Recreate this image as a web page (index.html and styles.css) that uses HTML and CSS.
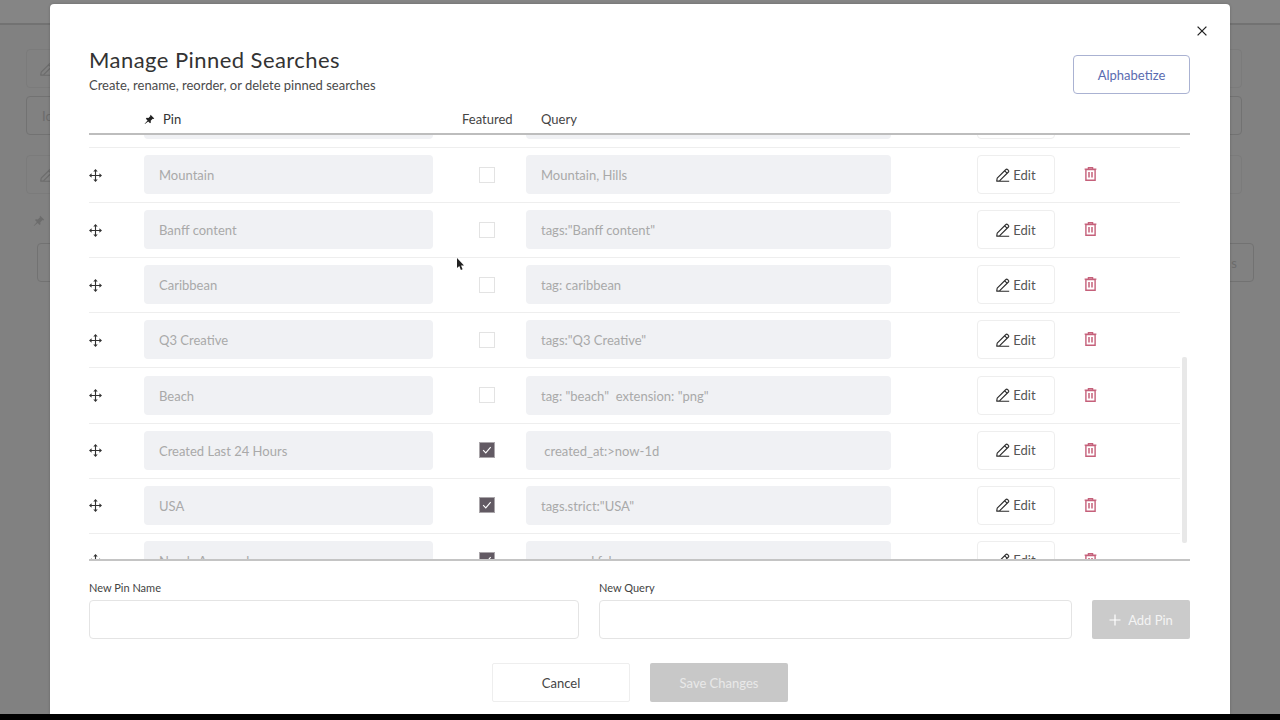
FILE: index.html
```html
<!DOCTYPE html>
<html lang="en">
<head>
    <meta charset="UTF-8">
    <title>Manage Pinned Searches</title>
    <link rel="stylesheet" href="styles.css">
</head>
<body>
    <svg class="icon-defs" aria-hidden="true">
        <symbol id="i-move" viewBox="0 0 14 14">
            <path d="M7 2v10M2 7h10" fill="none" stroke="currentColor" stroke-width="1.2"/>
            <path d="M7 0l2.4 2.8H4.6zM7 14l2.4-2.8H4.6zM0 7l2.8-2.4v4.8zM14 7l-2.8-2.4v4.8z" fill="currentColor"/>
        </symbol>
        <symbol id="i-pencil" viewBox="0 0 14 14">
            <path d="M1.2 10.2L9.9 1.5a1.1 1.1 0 0 1 1.6 0l.9.9a1.1 1.1 0 0 1 0 1.6l-8.7 8.7-3 .4zM8.7 2.8l2.6 2.6M1.2 13.2h12" fill="none" stroke="currentColor" stroke-width="1.1" stroke-linejoin="round"/>
        </symbol>
        <symbol id="i-trash" viewBox="0 0 13 14">
            <path d="M4.4 1.6V.7h4.2v.9M.6 2.2h11.8" fill="none" stroke="currentColor" stroke-width="1.3"/>
            <path d="M1.9 2.6h9.2v10.7H1.9z" fill="none" stroke="currentColor" stroke-width="1.4"/>
            <path d="M5 5v5.6M8 5v5.6" fill="none" stroke="currentColor" stroke-width="1.5"/>
        </symbol>
        <symbol id="i-pin" viewBox="0 0 12 12">
            <path d="M7.2.8l4 4-1 .6-.7-.3-2.2 2.2.2 1.9-.9.9-2-2L1 11l-.3-.3 3.2-3.7-1.9-1.9.9-.9 1.9.2 2.2-2.2-.3-.7z" fill="currentColor"/>
        </symbol>
        <symbol id="i-check" viewBox="0 0 16 16">
            <path d="M3.6 8.2l3 3 5.6-6.4" fill="none" stroke="#fff" stroke-width="1.3"/>
        </symbol>
    </svg>

    <div class="stage">
        <!-- page behind the dialog, dimmed -->
        <div class="back-page">
            <div class="back-top"></div>
            <div class="back-box back-box-first">
                <svg class="back-pencil"><use href="#i-pencil"/></svg>
            </div>
            <div class="back-box back-box-input"><span class="back-text">Ic</span></div>
            <div class="back-box back-box-third">
                <svg class="back-pencil"><use href="#i-pencil"/></svg>
            </div>
            <svg class="back-pin"><use href="#i-pin"/></svg>
            <div class="back-box back-box-last"><span class="back-text">s</span></div>
        </div>

        <div class="modal">
            <button class="close-btn" aria-label="Close">
                <svg width="10" height="10" viewBox="0 0 10 10"><path d="M.6.6l8.8 8.8M9.4.6L.6 9.4" stroke="#222" stroke-width="1.3" fill="none"/></svg>
            </button>

            <div class="modal-head">
                <div>
                    <h1>Manage Pinned Searches</h1>
                    <p class="subtitle">Create, rename, reorder, or delete pinned searches</p>
                </div>
                <button class="alpha-btn">Alphabetize</button>
            </div>

            <div class="col-head">
                <div class="col-pin"><svg class="pin-icon"><use href="#i-pin"/></svg>Pin</div>
                <div class="col-featured">Featured</div>
                <div class="col-query">Query</div>
            </div>

            <div class="pin-scroll">
                <div class="pin-list">
                    <div class="pin-row">
                        <svg class="grip"><use href="#i-move"/></svg>
                        <div class="field"></div>
                        <span class="check"></span>
                        <div class="field"></div>
                        <button class="edit-btn"></button>
                        <svg class="trash"><use href="#i-trash"/></svg>
                    </div>
                    <div class="pin-row">
                        <svg class="grip"><use href="#i-move"/></svg>
                        <div class="field">Mountain</div>
                        <span class="check"></span>
                        <div class="field">Mountain, Hills</div>
                        <button class="edit-btn"><svg><use href="#i-pencil"/></svg>Edit</button>
                        <svg class="trash"><use href="#i-trash"/></svg>
                    </div>
                    <div class="pin-row">
                        <svg class="grip"><use href="#i-move"/></svg>
                        <div class="field">Banff content</div>
                        <span class="check"></span>
                        <div class="field">tags:"Banff content"</div>
                        <button class="edit-btn"><svg><use href="#i-pencil"/></svg>Edit</button>
                        <svg class="trash"><use href="#i-trash"/></svg>
                    </div>
                    <div class="pin-row">
                        <svg class="grip"><use href="#i-move"/></svg>
                        <div class="field">Caribbean</div>
                        <span class="check"></span>
                        <div class="field">tag: caribbean</div>
                        <button class="edit-btn"><svg><use href="#i-pencil"/></svg>Edit</button>
                        <svg class="trash"><use href="#i-trash"/></svg>
                    </div>
                    <div class="pin-row">
                        <svg class="grip"><use href="#i-move"/></svg>
                        <div class="field">Q3 Creative</div>
                        <span class="check"></span>
                        <div class="field">tags:"Q3 Creative"</div>
                        <button class="edit-btn"><svg><use href="#i-pencil"/></svg>Edit</button>
                        <svg class="trash"><use href="#i-trash"/></svg>
                    </div>
                    <div class="pin-row">
                        <svg class="grip"><use href="#i-move"/></svg>
                        <div class="field">Beach</div>
                        <span class="check"></span>
                        <div class="field">tag: "beach"  extension: "png"</div>
                        <button class="edit-btn"><svg><use href="#i-pencil"/></svg>Edit</button>
                        <svg class="trash"><use href="#i-trash"/></svg>
                    </div>
                    <div class="pin-row">
                        <svg class="grip"><use href="#i-move"/></svg>
                        <div class="field">Created Last 24 Hours</div>
                        <span class="check checked"><svg><use href="#i-check"/></svg></span>
                        <div class="field"> created_at:&gt;now-1d</div>
                        <button class="edit-btn"><svg><use href="#i-pencil"/></svg>Edit</button>
                        <svg class="trash"><use href="#i-trash"/></svg>
                    </div>
                    <div class="pin-row">
                        <svg class="grip"><use href="#i-move"/></svg>
                        <div class="field">USA</div>
                        <span class="check checked"><svg><use href="#i-check"/></svg></span>
                        <div class="field">tags.strict:"USA"</div>
                        <button class="edit-btn"><svg><use href="#i-pencil"/></svg>Edit</button>
                        <svg class="trash"><use href="#i-trash"/></svg>
                    </div>
                    <div class="pin-row">
                        <svg class="grip"><use href="#i-move"/></svg>
                        <div class="field">Needs Approval</div>
                        <span class="check checked"><svg><use href="#i-check"/></svg></span>
                        <div class="field">approved:false</div>
                        <button class="edit-btn"><svg><use href="#i-pencil"/></svg>Edit</button>
                        <svg class="trash"><use href="#i-trash"/></svg>
                    </div>
                </div>
                <div class="scroll-thumb"></div>
                <svg class="cursor" width="9" height="14" viewBox="0 0 9 14"><path d="M1 0v10l2.3-2 1.6 4 1.7-.7-1.6-3.9H8z" fill="#222"/></svg>
            </div>

            <div class="new-pin">
                <div>
                    <label for="new-name">New Pin Name</label>
                    <input type="text" id="new-name">
                </div>
                <div>
                    <label for="new-query">New Query</label>
                    <input type="text" id="new-query">
                </div>
                <button class="add-btn">
                    <svg width="12" height="12" viewBox="0 0 12 12"><path d="M6 .5v11M.5 6h11" stroke="#fff" stroke-width="1.2" fill="none"/></svg>
                    Add Pin
                </button>
            </div>

            <div class="modal-foot">
                <button class="cancel-btn">Cancel</button>
                <button class="save-btn">Save Changes</button>
            </div>
        </div>
    </div>
</body>
</html>
```

FILE: styles.css
```css
* {
    box-sizing: border-box;
    margin: 0;
    padding: 0;
}

body {
    font-family: 'Lato', sans-serif;
    background: #000;
    height: 720px;
    overflow: hidden;
}

button {
    font-family: inherit;
    cursor: pointer;
}

.icon-defs {
    display: none;
}

.stage {
    position: relative;
    height: 714px;
    background: #818181;
    overflow: hidden;
}

/* dimmed page */
.back-page {
    height: 100%;
    color: #6c6c6c;
}

.back-top {
    height: 25px;
    background: #858585;
    border-bottom: 2px solid #727272;
}

.back-box {
    display: flex;
    align-items: center;
    border: 1px solid #7b7b7b;
    border-radius: 4px;
    height: 39px;
    margin: 0 38px 0 26px;
}

.back-box-first {
    margin-top: 24px;
}

.back-box-input {
    margin: 8px 38px 20px 26px;
    border-color: #727272;
}

.back-box-last {
    margin: 16px 26px 0 37px;
    justify-content: flex-end;
    border-color: #727272;
    padding-right: 16px;
}

.back-pencil {
    width: 14px;
    height: 14px;
    margin-left: 13px;
}

.back-text {
    font-size: 13px;
    padding-left: 15px;
}

.back-pin {
    display: block;
    width: 12px;
    height: 12px;
    margin: 21px 0 0 33px;
}

/* dialog */
.modal {
    position: absolute;
    top: 4px;
    left: 50px;
    right: 50px;
    bottom: 0;
    padding: 41px 40px 0 39px;
    background: #fff;
    border-radius: 4px 4px 0 0;
    box-shadow: 0 0 3px rgba(0, 0, 0, 0.2);
    color: #333;
}

.close-btn {
    position: absolute;
    top: 22px;
    right: 23px;
    display: flex;
    background: none;
    border: 0;
}

.modal-head {
    display: flex;
    justify-content: space-between;
    height: 50px;
}

h1 {
    font-size: 22px;
    font-weight: 400;
    line-height: 30px;
    letter-spacing: 0.45px;
    color: #333;
}

.subtitle {
    font-size: 13px;
    line-height: 20px;
    color: #4a4a4a;
}

.alpha-btn {
    width: 117px;
    height: 39px;
    margin-top: 10px;
    background: #fff;
    border: 1px solid #aab2d2;
    border-radius: 4px;
    color: #5a6bb0;
    font-size: 13px;
}

.col-head {
    display: flex;
    align-items: center;
    height: 30px;
    margin-top: 10px;
    border-bottom: 2px solid #bdbdbd;
    font-size: 13px;
}

.col-pin {
    display: flex;
    align-items: center;
    width: 318px;
    margin-left: 55px;
    color: #333;
}

.pin-icon {
    width: 11px;
    height: 11px;
    margin-right: 8px;
    color: #222;
}

.col-featured {
    width: 79px;
    color: #444;
}

.col-query {
    color: #444;
}

.pin-scroll {
    position: relative;
    height: 424px;
    overflow: hidden;
}

.pin-list {
    margin-top: -42px;
    width: 1091px;
}

.pin-row {
    display: grid;
    grid-template-columns: 55px 289px 93px 365px 164px 1fr;
    align-items: center;
    height: 55.1px;
    padding-bottom: 1px;
    border-bottom: 1px solid #eeeeee;
}

.grip {
    width: 13px;
    height: 13px;
    margin-top: 1px;
    color: #333;
}

.field {
    height: 39px;
    padding: 0 15px;
    background: #f0f1f4;
    border-radius: 4px;
    color: #a9a9a9;
    font-size: 13px;
    line-height: 41px;
    white-space: pre;
}

.check {
    display: block;
    width: 16px;
    height: 16px;
    margin-left: 46px;
    background: #fff;
    border: 1px solid #e3e3e3;
}

.check.checked {
    background: #625a63;
    border-color: #aaa6aa;
}

.check svg {
    display: block;
    width: 14px;
    height: 14px;
}

.edit-btn {
    display: flex;
    align-items: center;
    justify-content: center;
    height: 39px;
    margin-left: 86px;
    background: #fff;
    border: 1px solid #eeeeee;
    border-radius: 4px;
    color: #555;
    font-size: 13px;
}

.edit-btn svg {
    width: 14px;
    height: 14px;
    margin-right: 3px;
    color: #2a2a2a;
}

.trash {
    width: 13px;
    height: 14px;
    margin: -1px 0 0 29px;
    color: #c5607a;
}

.scroll-thumb {
    position: absolute;
    top: 222px;
    right: 3px;
    width: 5px;
    height: 186px;
    background: #e8e8e8;
    border-radius: 2px;
}

.cursor {
    position: absolute;
    top: 123px;
    left: 367px;
}

.new-pin {
    display: grid;
    grid-template-columns: 490px 473px 98px;
    column-gap: 20px;
    align-items: end;
    padding-top: 20px;
    border-top: 2px solid #c4c4c4;
}

label {
    display: block;
    margin-bottom: 5px;
    color: #444;
    font-size: 11px;
    line-height: 14px;
}

input[type="text"] {
    display: block;
    width: 100%;
    height: 39px;
    background: #fff;
    border: 1px solid #e4e4e4;
    border-radius: 4px;
}

.add-btn {
    display: flex;
    align-items: center;
    justify-content: center;
    gap: 7px;
    height: 39px;
    background: #cbcbcb;
    border: 0;
    border-radius: 2px;
    color: #f4f4f4;
    font-size: 13px;
}

.modal-foot {
    display: flex;
    justify-content: center;
    gap: 20px;
    margin-top: 24px;
    padding-left: 1px;
}

.cancel-btn,
.save-btn {
    width: 138px;
    height: 39px;
    border-radius: 2px;
    font-size: 13px;
}

.cancel-btn {
    background: #fff;
    border: 1px solid #eeeeee;
    color: #444;
}

.save-btn {
    background: #c8c8c8;
    border: 0;
    color: #e9e9e9;
}
```
